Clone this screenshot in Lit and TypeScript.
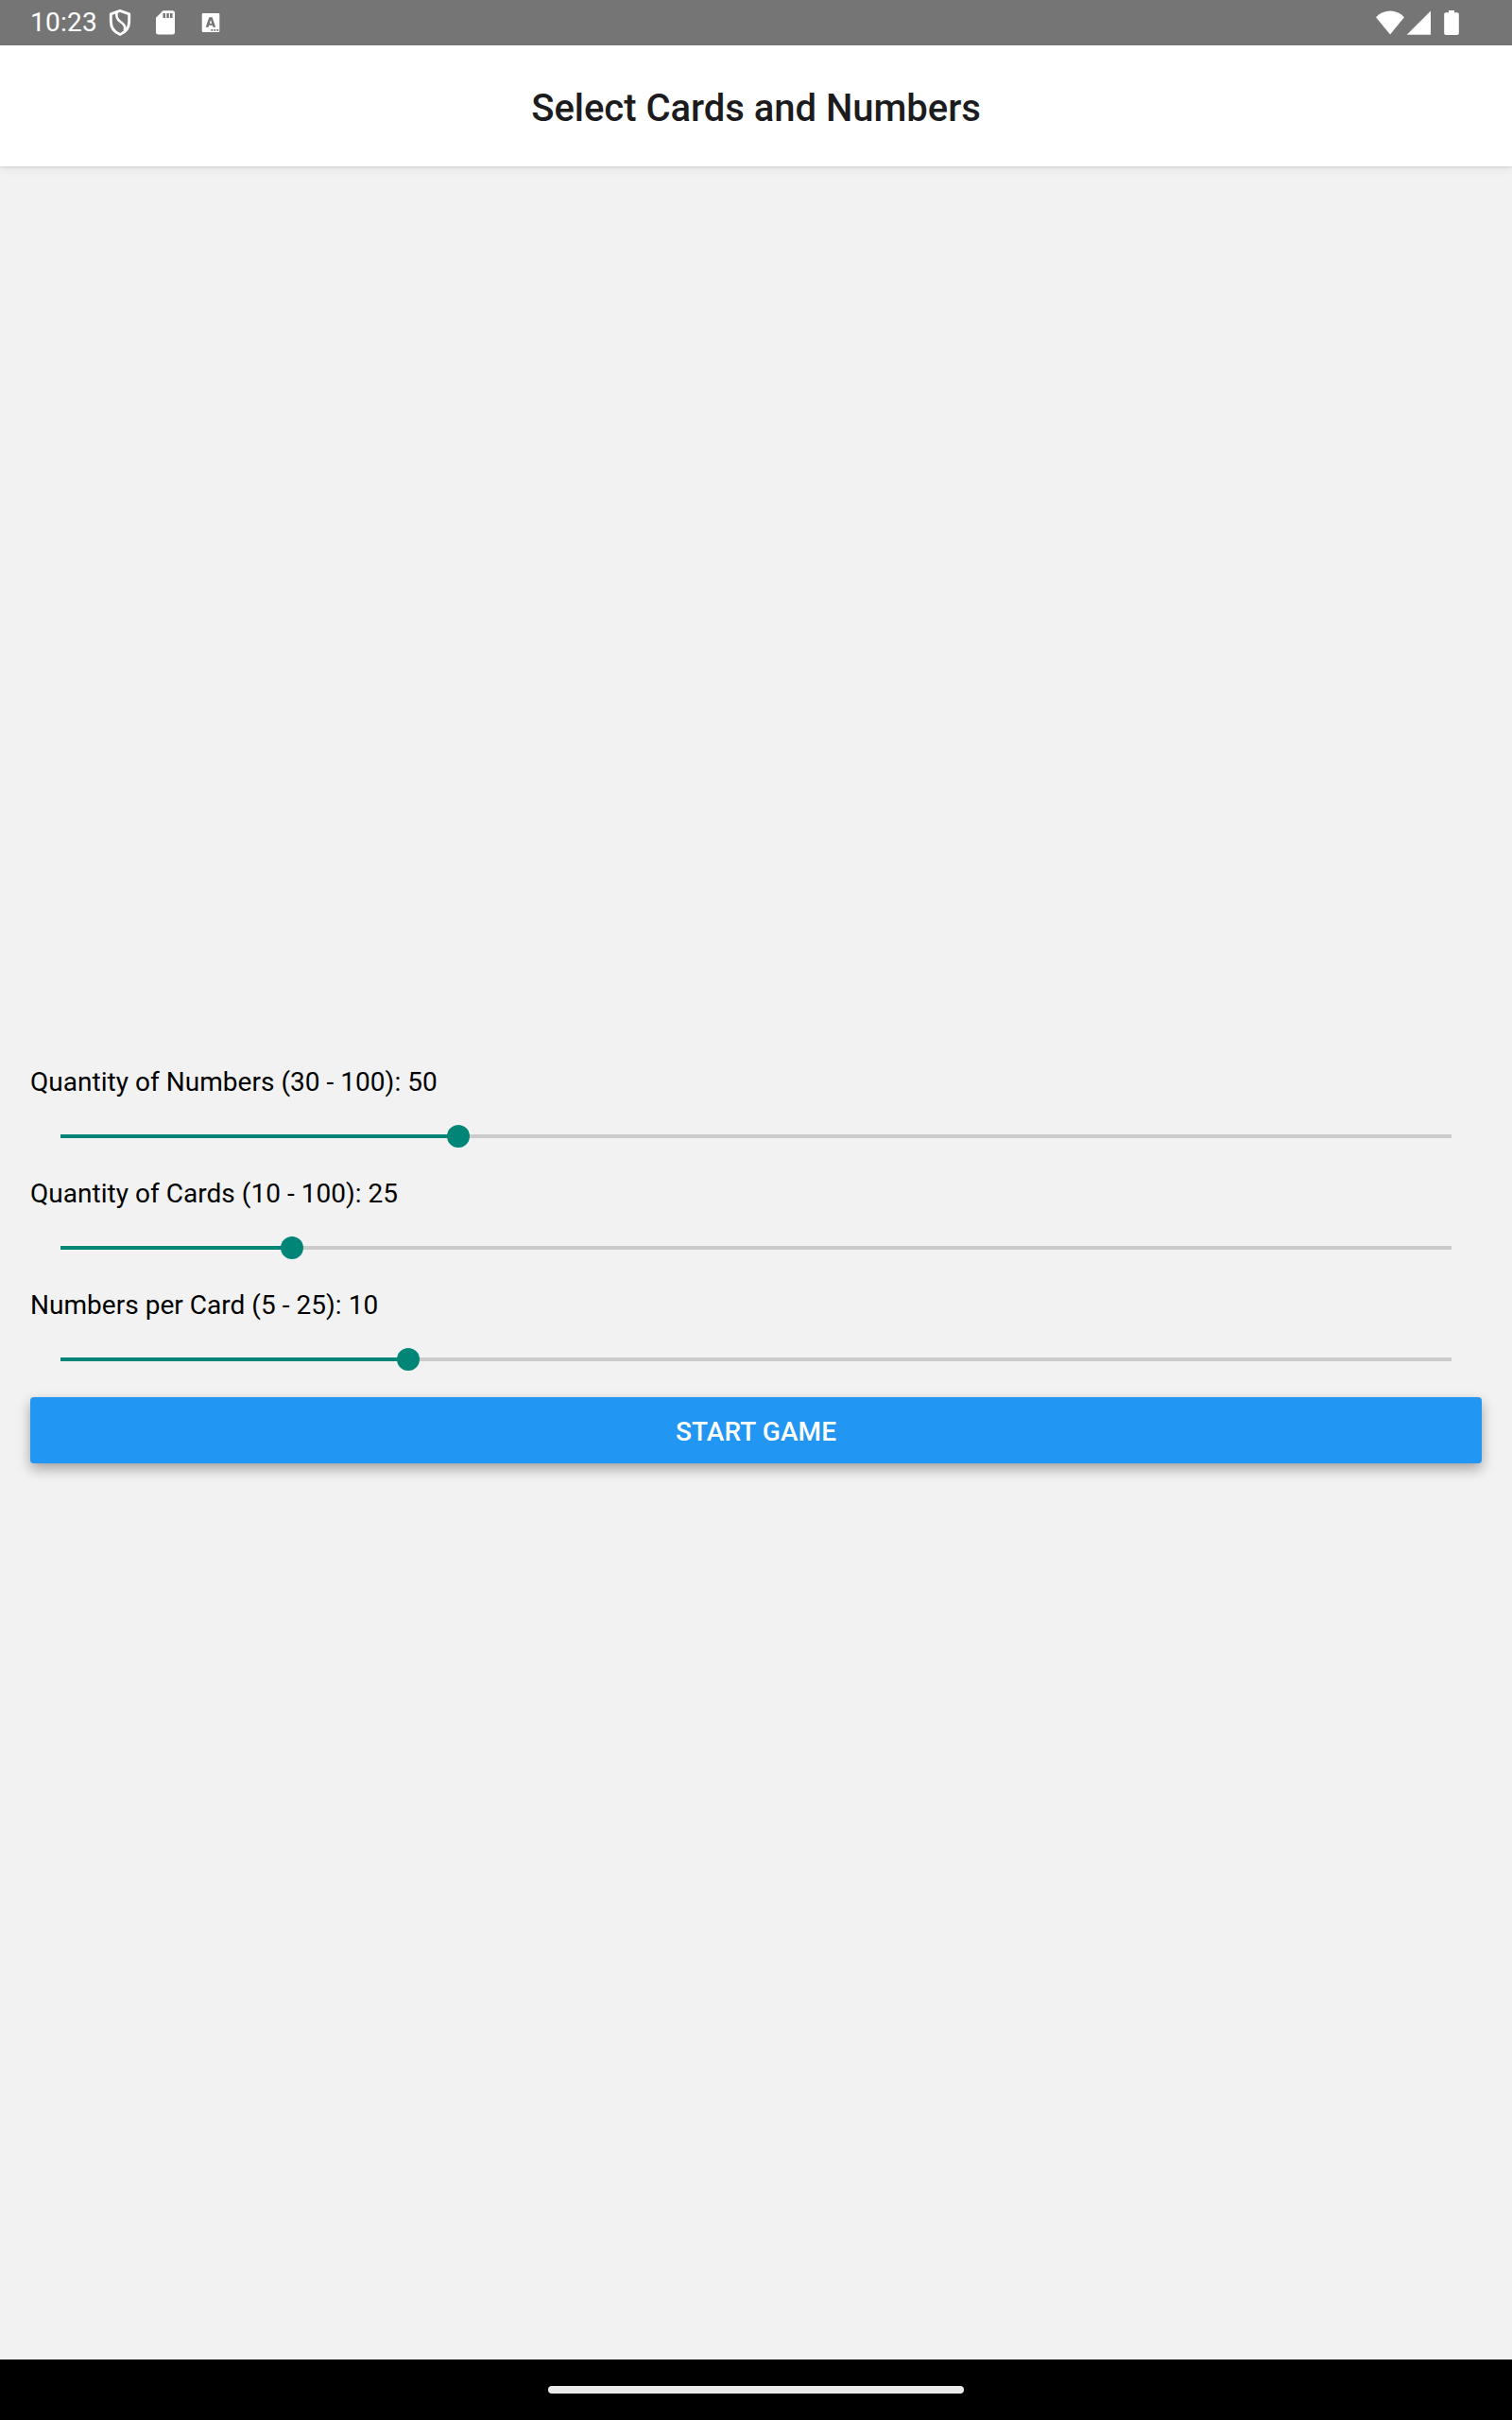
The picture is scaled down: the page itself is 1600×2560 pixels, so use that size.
import { LitElement, html, css } from "lit";
import { customElement, property, state } from "lit/decorators.js";

@customElement("status-bar")
class StatusBar extends LitElement {
  static styles = css`
    :host {
      display: block;
    }
    .bar {
      display: flex;
      align-items: center;
      justify-content: space-between;
      box-sizing: border-box;
      height: 48px;
      padding: 0 52px 0 32px;
      background: #757575;
      color: #fff;
    }
    .side {
      display: flex;
      align-items: center;
      height: 48px;
    }
    .clock {
      width: 72px;
      font-size: 28px;
      line-height: 48px;
      letter-spacing: 0.25px;
      white-space: nowrap;
    }
    svg {
      display: block;
      height: 48px;
      flex: none;
    }
  `;

  render() {
    return html`
      <div class="bar">
        <div class="side">
          <span class="clock">10:23</span>
          <svg width="146" height="48" viewBox="104 0 146 48">
            <path
              d="M127 11.4 L136.7 14.8 V22.5 C136.7 29.5 132.5 34.2 127 36.5 C121.5 34.2 117.3 29.5 117.3 22.5 V14.8 Z"
              fill="none" stroke="#fff" stroke-width="2.9" stroke-linejoin="round" />
            <path
              d="M123.5 13.2 C122.5 18.5 124 20.6 127.5 23 C131.5 25.8 133.3 28 131.8 32.5"
              fill="none" stroke="#fff" stroke-width="2.7" />
            <path
              fill="#fff" fill-rule="evenodd"
              d="M172.5 11.3 H182.5 A2.5 2.5 0 0 1 185 13.8 V34 A2.5 2.5 0 0 1 182.5 36.5 H167.5 A2.5 2.5 0 0 1 165 34 V18.8 Z M172.5 14 V19 H175 V14 Z M176.3 14 V19 H178.8 V14 Z M180 14 V19 H182.5 V14 Z" />
            <path
              fill="#fff" fill-rule="evenodd"
              d="M215 14 H231 A1.3 1.3 0 0 1 232.3 15.3 V32.7 A1.3 1.3 0 0 1 231 34 H215 A1.3 1.3 0 0 1 213.7 32.7 V15.3 A1.3 1.3 0 0 1 215 14 Z M221.3 18.3 L217.7 28.8 H220.5 L221.2 26.7 H224.8 L225.5 28.8 H228.2 L224.6 18.3 Z M223 21 L224.2 24.7 H221.8 Z M223.3 31 V32.7 H225.2 V31 Z M226.3 31 V32.7 H228.2 V31 Z M229.3 31 V32.7 H231.2 V31 Z" />
          </svg>
        </div>
        <svg width="98" height="48" viewBox="1450 0 98 48">
          <path fill="#fff" d="M1456 18.2 C1464.5 9.3 1477.5 9.3 1486 18.2 L1471 36.5 Z" />
          <path fill="#fff" d="M1514 11.5 V36.7 H1488.7 Z" />
          <path
            fill="#fff"
            d="M1533 11 H1539 V13.3 H1542 A1.8 1.8 0 0 1 1543.8 15.1 V35.2 A1.8 1.8 0 0 1 1542 37 H1530 A1.8 1.8 0 0 1 1528.2 35.2 V15.1 A1.8 1.8 0 0 1 1530 13.3 H1533 Z" />
        </svg>
      </div>
    `;
  }
}

@customElement("value-slider")
class ValueSlider extends LitElement {
  @property() label = "";
  @property({ type: Number }) min = 0;
  @property({ type: Number }) max = 100;
  @property({ type: Number }) value = 0;

  static styles = css`
    :host {
      display: block;
    }
    .label {
      box-sizing: border-box;
      height: 38px;
      padding-top: 4px;
      font-size: 28px;
      line-height: 33px;
      letter-spacing: 0.03px;
      color: #000;
      white-space: nowrap;
    }
    .slider {
      display: flex;
      align-items: center;
      height: 80px;
      padding: 0 32px;
    }
    .fill {
      height: 4px;
      background: #008577;
    }
    .thumb {
      flex: none;
      width: 24px;
      height: 24px;
      margin: 0 -12px;
      border-radius: 50%;
      background: #008577;
      z-index: 1;
    }
    .rest {
      flex: 1;
      height: 4px;
      background: #cbcbcb;
    }
  `;

  render() {
    const percent = ((this.value - this.min) / (this.max - this.min)) * 100;
    return html`
      <div class="label">${this.label} (${this.min} - ${this.max}): ${this.value}</div>
      <div class="slider">
        <div class="fill" style="width: ${percent}%"></div>
        <div class="thumb"></div>
        <div class="rest"></div>
      </div>
    `;
  }
}

@customElement("app-root")
class AppRoot extends LitElement {
  @state() private sliders = [
    { label: "Quantity of Numbers", min: 30, max: 100, value: 50 },
    { label: "Quantity of Cards", min: 10, max: 100, value: 25 },
    { label: "Numbers per Card", min: 5, max: 25, value: 10 },
  ];

  static styles = css`
    :host {
      display: flex;
      flex-direction: column;
      height: 2560px;
      background: #f2f2f2;
      font-family: Roboto, sans-serif;
    }
    .header {
      display: flex;
      align-items: center;
      justify-content: center;
      box-sizing: border-box;
      height: 128px;
      padding-top: 6px;
      background: #fff;
      box-shadow: 0 1px 2px rgba(0, 0, 0, 0.1), 0 3px 9px rgba(0, 0, 0, 0.07);
    }
    .title {
      margin: 0;
      font-size: 40px;
      font-weight: 500;
      line-height: 48px;
      letter-spacing: -0.03px;
      color: #1c1c1e;
      white-space: nowrap;
    }
    .content {
      flex: 1;
      display: flex;
      flex-direction: column;
      justify-content: center;
      padding: 0 32px;
    }
    .start {
      height: 70px;
      padding: 3px 0 0;
      border: 0;
      border-radius: 4px;
      background: #2196f3;
      box-shadow: 0 6px 14px rgba(0, 0, 0, 0.32), 0 0 4px rgba(0, 0, 0, 0.04);
      color: #fff;
      font-family: inherit;
      font-size: 28px;
      font-weight: 500;
      line-height: 34px;
      letter-spacing: 0.08px;
    }
    .nav {
      display: flex;
      align-items: center;
      justify-content: center;
      height: 64px;
      background: #000;
    }
    .handle {
      width: 440px;
      height: 8px;
      border-radius: 4px;
      background: #ebebeb;
    }
  `;

  render() {
    return html`
      <status-bar></status-bar>
      <header class="header"><h1 class="title">Select Cards and Numbers</h1></header>
      <main class="content">
        ${this.sliders.map(
          (s) => html`<value-slider .label=${s.label} .min=${s.min} .max=${s.max} .value=${s.value}></value-slider>`
        )}
        <button class="start">START GAME</button>
      </main>
      <div class="nav"><div class="handle"></div></div>
    `;
  }
}
